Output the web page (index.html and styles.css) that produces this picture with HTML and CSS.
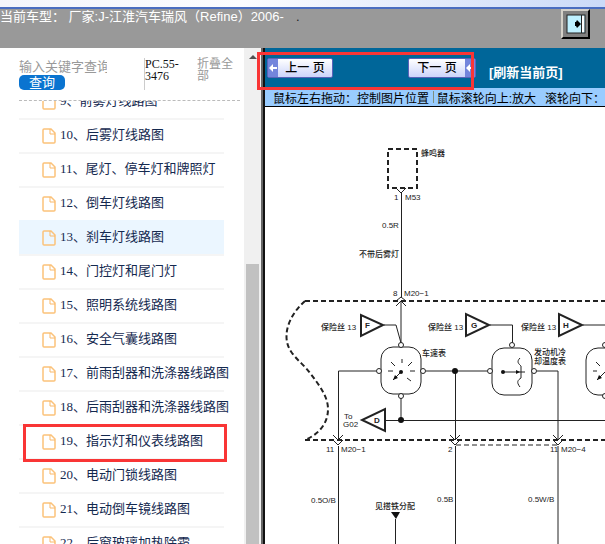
FILE: index.html
```html
<!DOCTYPE html>
<html lang="zh-CN">
  <head>
    <meta charset="UTF-8" />
    <meta name="viewport" content="width=device-width, initial-scale=1.0" />
    <title>线路图</title>
    <link rel="stylesheet" href="styles.css">
  </head>
  <body>
    <div class="topStrip"></div>
    <header class="header">
      <p class="model">当前车型： 厂家:J-江淮汽车瑞风（Refine）2006-<span class="dot">.</span></p>
      <button class="exit" aria-label="退出">
        <svg width="20" height="20" viewBox="0 0 20 20">
          <rect x="1" y="1" width="18" height="18" fill="#bff0ff" stroke="#222" />
          <path d="M15.500 1v18" stroke="#222" />
          <rect x="16" y="2" width="2" height="16" fill="#fff" />
          <path d="M9 8h1l1-2 4 4-4 4-1-2H9z" fill="#000" />
        </svg>
      </button>
    </header>

    <main class="main">
      <aside class="sidebar">
        <div class="tree">
          <form class="search" action="#">
            <div class="searchBox">
              <input type="text" placeholder="输入关键字查询" aria-label="输入关键字查询" />
              <button>查询</button>
            </div>
            <span class="code">PC.55-3476</span>
            <a class="fold" href="#">折叠全部</a>
          </form>
          <div class="listBox">
            <ul class="list">
              <li><a href="#"><svg class="file"><use href="#file" /></svg>9、前雾灯线路图</a></li>
              <li><a href="#"><svg class="file"><use href="#file" /></svg>10、后雾灯线路图</a></li>
              <li><a href="#"><svg class="file"><use href="#file" /></svg>11、尾灯、停车灯和牌照灯</a></li>
              <li><a href="#"><svg class="file"><use href="#file" /></svg>12、倒车灯线路图</a></li>
              <li class="active"><a href="#"><svg class="file"><use href="#file" /></svg>13、刹车灯线路图</a></li>
              <li><a href="#"><svg class="file"><use href="#file" /></svg>14、门控灯和尾门灯</a></li>
              <li><a href="#"><svg class="file"><use href="#file" /></svg>15、照明系统线路图</a></li>
              <li><a href="#"><svg class="file"><use href="#file" /></svg>16、安全气囊线路图</a></li>
              <li><a href="#"><svg class="file"><use href="#file" /></svg>17、前雨刮器和洗涤器线路图</a></li>
              <li><a href="#"><svg class="file"><use href="#file" /></svg>18、后雨刮器和洗涤器线路图</a></li>
              <li class="marked"><a href="#"><svg class="file"><use href="#file" /></svg>19、指示灯和仪表线路图</a></li>
              <li><a href="#"><svg class="file"><use href="#file" /></svg>20、电动门锁线路图</a></li>
              <li><a href="#"><svg class="file"><use href="#file" /></svg>21、电动倒车镜线路图</a></li>
              <li><a href="#"><svg class="file"><use href="#file" /></svg>22、后窗玻璃加热除霜</a></li>
            </ul>
          </div>
        </div>
        <div class="scrollbar">
          <div class="arrow"></div>
          <div class="thumb"></div>
        </div>
      </aside>

      <section class="viewer">
        <nav class="toolbar">
          <button class="page prev">
            <span class="cap"><svg width="8" height="8" viewBox="0 0 8 8"><path d="M0 4l4-4v3h4v2H4v3z" fill="#fff" /></svg></span>
            <span class="label">上一 页</span>
          </button>
          <button class="page next">
            <span class="label">下一 页</span>
            <span class="cap"><svg width="8" height="8" viewBox="0 0 8 8"><path d="M0 4l4-4v3h4v2H4v3z" fill="#fff" /></svg></span>
          </button>
          <a class="refresh" href="#">[刷新当前页]</a>
        </nav>
        <p class="hint">鼠标左右拖动：控制图片位置<i></i>鼠标滚轮向上:放大<span>滚轮向下：</span></p>
        <div class="canvas">
          <svg class="diagram" width="400" height="500" viewBox="265 107 400 500">
            <!-- dashed outlines -->
            <g class="dash">
              <rect x="388" y="149" width="29" height="39" />
              <path d="M305 301H665" />
              <path d="M305 440H665" />
              <path d="M305 301C289 315 280 337 292 353C298 361 305 366 310 373C320 386 328 397 328 409C328 425 317 435 305 440" />
              <path class="thin" d="M456 445H557" />
            </g>

            <!-- wires -->
            <g class="wire">
              <path d="M401.500 193V297M401 301V343" />
              <path d="M384 325H396L401 343" />
              <path d="M376 371H338.500V440M338.500 446V607" />
              <path d="M426 371H487M455.500 371V440M455.500 446V607" />
              <path d="M490 325H512.500V343" />
              <path d="M537 371H558V440M558 446V607" />
              <path d="M583 325H605.500V343" />
              <path d="M401 398V420" />
              <path class="bold" d="M385 420.500H605.500V398" />
              <path d="M395.500 519V607" />
            </g>

            <!-- connectors -->
            <g class="joint">
              <path d="M396 188l5 5 5-5" />
              <path d="M396 301l5-4 5 4M396 306l5-5 5 5" />
              <path d="M333 435l5 5 5-5M333 440l5 5 5-5" />
              <path d="M450 435l5 5 5-5M450 440l5 5 5-5" />
              <path d="M553 435l5 5 5-5M553 440l5 5 5-5" />
            </g>

            <!-- fuses -->
            <g class="tri">
              <path d="M361 315v21l22-11z" />
              <path d="M466 314v22l23-11z" />
              <path d="M559 314v22l23-11z" />
              <path d="M385 409v22l-23-11z" />
            </g>

            <!-- gauges -->
            <g class="gauge">
              <rect x="381" y="347" width="40" height="47" rx="12" />
              <rect x="492" y="348" width="40" height="47" rx="12" />
              <rect x="586" y="348" width="40" height="47" rx="12" />
              <circle cx="401" cy="345" r="2.500" />
              <circle cx="379" cy="371" r="2.500" />
              <circle cx="423" cy="371" r="2.500" />
              <circle cx="401" cy="396" r="2.500" />
              <circle cx="512" cy="345" r="2.500" />
              <circle cx="490" cy="371" r="2.500" />
              <circle cx="534" cy="371" r="2.500" />
              <circle cx="605" cy="345" r="2.500" />
              <circle cx="605" cy="396" r="2.500" />
              <path d="M402 359v4M391 362l4 4M412 362l-4 4M388 371h5M410 371h5M407 378l4 3M401 372l-8 8" />
              <path d="M596 362l4 4M593 371h4M605 372l-8 8" />
              <path d="M503 372h22M520 358c-4 4-1 6 1 8v12c-3 2-5 4-1 9" />
            </g>
            <g class="solid">
              <circle cx="401" cy="420" r="3" />
              <circle cx="455" cy="371" r="3" />
              <circle cx="503" cy="372" r="2" />
              <circle cx="401" cy="372" r="2" />
              <path d="M393 380l2-5 3 3zM597 380l2-5 3 3zM520 372l-4-2v4z" />
              <path d="M391 512h9l-4 7z" />
            </g>

            <g class="text">
              <text x="421" y="156">蜂鸣器</text>
              <text x="394" y="200">1</text>
              <text x="405" y="200">M53</text>
              <text x="382" y="228">0.5R</text>
              <text x="359" y="257">不带后雾灯</text>
              <text x="393" y="296">8</text>
              <text x="404" y="296">M20−1</text>
              <text x="321" y="330">保险丝 13</text>
              <text x="428" y="330">保险丝 13</text>
              <text x="521" y="330">保险丝 13</text>
              <text x="422" y="356">车速表</text>
              <text x="534" y="355">发动机冷</text>
              <text x="534" y="364">却温度表</text>
              <text x="344" y="419">To</text>
              <text x="343" y="427">G02</text>
              <text x="326" y="452">11</text>
              <text x="341" y="452">M20−1</text>
              <text x="448" y="452">2</text>
              <text x="550" y="452">11</text>
              <text x="561" y="452">M20−4</text>
              <text x="311" y="503">0.5O/B</text>
              <text x="437" y="502">0.5B</text>
              <text x="528" y="502">0.5W/B</text>
              <text x="375" y="509">见搭铁分配</text>
            </g>
            <g class="text strong">
              <text x="365" y="328">F</text>
              <text x="471" y="328">G</text>
              <text x="563" y="328">H</text>
              <text x="374" y="423">D</text>
            </g>
          </svg>
        </div>
      </section>
      <div class="mark"></div>
    </main>

    <svg class="defs">
      <symbol id="file" viewBox="0 0 14 16">
        <path d="M2 1h7l4 4v9a1 1 0 0 1-1 1H2a1 1 0 0 1-1-1V2a1 1 0 0 1 1-1z" fill="none" stroke="#fbc27a" stroke-width="1.500" />
        <path d="M8 1v5h5" fill="none" stroke="#f9b868" />
      </symbol>
    </svg>
  </body>
</html>
```

FILE: styles.css
```css
*,
*::after {
  box-sizing: border-box;
}
body {
  margin: 0;
  height: 100vh;
  display: flex;
  flex-direction: column;
  overflow: hidden;
  background: #fff;
  font-family: 'Liberation Sans', 'Noto Sans CJK SC', sans-serif;
  font-size: 13px;
}
p {
  margin: 0;
}
a {
  color: inherit;
  text-decoration: none;
}
button {
  padding: 0;
  font-family: inherit;
}
.defs {
  display: none;
}

/* header */
.topStrip {
  flex: none;
  height: 9px;
  background: linear-gradient(to right, #f4f5fb, #fbfcff 40%, #cbdaf8);
  border-bottom: 2px solid #4a6dc0;
}
.header {
  flex: none;
  display: flex;
  justify-content: space-between;
  height: 39px;
  padding-right: 15px;
  background: #999;
}
.model {
  color: #fff;
  line-height: 16px;
  white-space: nowrap;
}
.dot {
  margin-left: 12px;
  color: #222;
}
.exit {
  display: flex;
  align-items: center;
  justify-content: center;
  width: 29px;
  height: 30px;
  background: #808080;
  border: 2px solid;
  border-color: #d4d0c8 #000 #000 #d4d0c8;
}

.main {
  position: relative;
  flex: 1;
  display: flex;
  min-height: 0;
}

/* left tree */
.sidebar {
  flex: none;
  display: flex;
  width: 265px;
  border-right: 2px solid #111;
}
.tree {
  flex: 1;
  display: flex;
  flex-direction: column;
  min-width: 0;
  padding: 0 4px 0 19px;
}
.search {
  flex: none;
  display: flex;
  height: 53px;
  padding-top: 10px;
  border-bottom: 1px dashed #bbb;
}
.searchBox {
  display: flex;
  flex-direction: column;
  align-items: flex-start;
  width: 125px;
}
.searchBox input {
  width: 88px;
  height: 17px;
  padding: 0;
  border: 0;
  background: none;
  font: inherit;
}
.searchBox input::placeholder {
  color: #999;
}
.searchBox button {
  width: 46px;
  height: 15px;
  border: 0;
  border-radius: 5px;
  background: #0a74d0;
  color: #fff;
  font-size: 13px;
  line-height: 15px;
}
.code {
  width: 53px;
  height: 32px;
  border-left: 1px solid #ccc;
  color: #111;
  font: 12px/12px 'Liberation Serif', serif;
  word-break: break-all;
  padding-right: 18px;
}
.fold {
  width: 36px;
  color: #999;
  font-size: 12px;
  line-height: 12px;
}
.listBox {
  flex: 1;
  min-height: 0;
  overflow: hidden;
}
.list {
  width: 205px;
  margin: -17px 0 0;
  padding: 0;
  list-style: none;
  color: #14294f;
  font-family: 'Liberation Serif', 'Noto Sans CJK SC', serif;
}
.list li {
  position: relative;
  height: 34px;
  border-top: 2px solid #f5f5f5;
}
.list a {
  display: flex;
  gap: 4px;
  padding-left: 23px;
  line-height: 30px;
  white-space: nowrap;
}
.list .active {
  background: #ebf6ff;
  border-color: #ebf6ff;
}
.file {
  flex: none;
  width: 14px;
  height: 16px;
  margin-top: 8px;
}
.scrollbar {
  flex: none;
  display: flex;
  flex-direction: column;
  align-items: center;
  width: 19px;
  padding-top: 7px;
  background: #f0f0f0;
  border-right: 2px solid #666;
}
.arrow {
  border: 4px solid transparent;
  border-top: 0;
  border-bottom-color: #505050;
}
.thumb {
  flex: 1;
  width: 13px;
  margin-top: 205px;
  background: #c1c1c1;
}

/* right viewer */
.viewer {
  flex: 1;
  display: flex;
  flex-direction: column;
  min-width: 0;
}
.toolbar {
  flex: none;
  display: flex;
  align-items: flex-start;
  height: 40px;
  padding: 10px 0 0 2px;
  background: #069;
}
.page {
  display: flex;
  align-items: stretch;
  height: 20px;
  border: 1px solid #5a62b8;
  border-radius: 2px;
  background: linear-gradient(#fff, #ccd4fa);
  color: #000;
  font-size: 12px;
  font-weight: 500;
}
.page .label {
  flex: 1;
  line-height: 18px;
}
.page .cap {
  display: flex;
  align-items: center;
  justify-content: center;
  width: 10px;
  background: #7385dc;
}
.prev {
  width: 66px;
}
.next {
  width: 68px;
  margin-left: 75px;
}
.refresh {
  margin-left: 13px;
  padding-top: 6px;
  color: #fff;
  font-weight: bold;
  line-height: 18px;
  white-space: nowrap;
}
.hint {
  flex: none;
  display: flex;
  align-items: center;
  height: 19px;
  padding-left: 8px;
  overflow: hidden;
  background: #9cf;
  border-bottom: 1px solid #000;
  color: #000;
  font-size: 12px;
  white-space: nowrap;
}
.hint i {
  width: 1px;
  height: 12px;
  margin: 0 3px 0 4px;
  background: #7f8f7f;
}
.hint span {
  margin-left: 9px;
}
.canvas {
  flex: 1;
  min-height: 0;
  overflow: hidden;
}

/* wiring diagram */
.diagram {
  display: block;
  fill: none;
  stroke: #222;
}
.dash {
  stroke-width: 2;
  stroke-dasharray: 5 3;
}
.dash .thin,
.wire,
.joint {
  stroke-width: 1;
}
.wire .bold {
  stroke-width: 1;
}
.tri {
  stroke-width: 2;
}
.gauge {
  fill: #fff;
}
.gauge path {
  fill: none;
}
.solid {
  fill: #111;
  stroke: none;
}
.text {
  fill: #222;
  stroke: none;
  font-size: 8px;
  font-weight: 500;
}
.strong {
  font-weight: bold;
}

/* red highlight frames */
.mark,
.marked::after {
  position: absolute;
  border: 3px solid #f93535;
  pointer-events: none;
}
.mark {
  top: 4px;
  left: 257px;
  width: 217px;
  height: 38px;
}
.marked::after {
  content: '';
  top: -2px;
  left: 4px;
  width: 204px;
  height: 38px;
}
.marked {
  z-index: 1;
}
```
